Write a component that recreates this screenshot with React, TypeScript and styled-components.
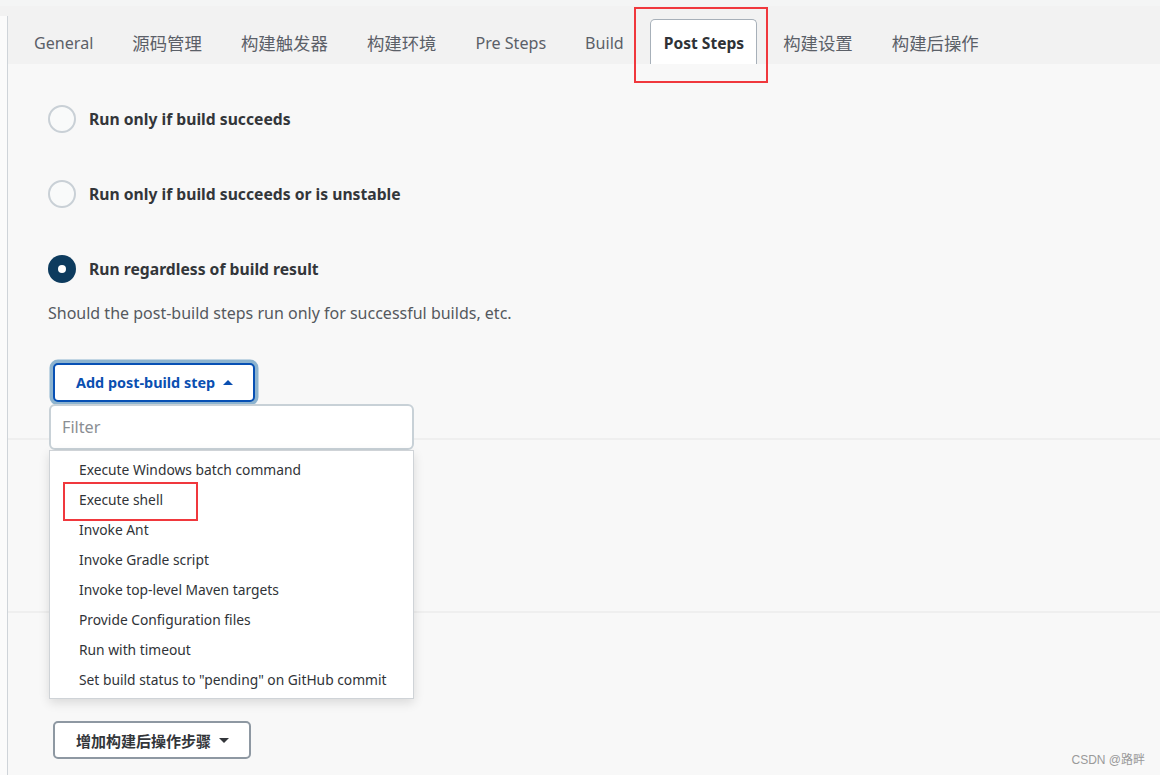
import React from 'react';
import styled, { createGlobalStyle } from 'styled-components';

// ______________________________________________________
//
// @ Data
const TABS = [
  { label: 'General' },
  { label: '源码管理', cjk: true },
  { label: '构建触发器', cjk: true },
  { label: '构建环境', cjk: true },
  { label: 'Pre Steps' },
  { label: 'Build' },
  { label: 'Post Steps', active: true },
  { label: '构建设置', cjk: true },
  { label: '构建后操作', cjk: true },
];

const OPTIONS = [
  { label: 'Run only if build succeeds', checked: false },
  { label: 'Run only if build succeeds or is unstable', checked: false },
  { label: 'Run regardless of build result', checked: true },
];

const STEPS = [
  'Execute Windows batch command',
  'Execute shell',
  'Invoke Ant',
  'Invoke Gradle script',
  'Invoke top-level Maven targets',
  'Provide Configuration files',
  'Run with timeout',
  'Set build status to "pending" on GitHub commit',
];

const FONT = `"Noto Sans", "Noto Sans CJK SC", sans-serif`;

// ______________________________________________________
//
// @ Global
const GlobalStyle = createGlobalStyle`
  html, body {
    margin: 0;
    padding: 0;
    background: #f8f8f8;
    font-family: ${FONT};
  }
  * { box-sizing: border-box; }
`;

// ______________________________________________________
//
// @ Layout
const Page = styled.div`
  width: 1160px;
  height: 775px;
  overflow: hidden;
  display: flex;
  flex-direction: column;
  background: #f8f8f8;
  position: relative;
`;

const TopStrip = styled.div`
  height: 16px;
  flex: none;
  background: linear-gradient(#f4f5f5 0, #f4f5f5 6px, #f2f2f2 6px);
`;

const Body = styled.div`
  flex: 1;
  display: flex;
`;

const Gutter = styled.div`
  width: 8px;
  flex: none;
  background: #fbfbfb;
  border-right: 1px solid #cfd4d9;
`;

const Main = styled.div`
  flex: 1;
  display: flex;
  flex-direction: column;
`;

// ______________________________________________________
//
// @ Tabs
const TabBar = styled.div`
  height: 48px;
  flex: none;
  display: flex;
  align-items: flex-end;
  padding-left: 6.5px;
  background: #f2f2f2;
`;

const Tab = styled.div<{ $active?: boolean; $cjk?: boolean }>`
  position: relative;
  height: ${p => (p.$active ? '45px' : '48px')};
  display: flex;
  align-items: center;
  padding: ${p => (p.$active ? '0 12px 0 13px' : '0 19.5px')};
  margin: ${p => (p.$active ? '0 6.5px' : '0')};
  font-size: ${p => (p.$cjk ? '17.4px' : p.$active ? '15.6px' : '16.1px')};
  font-weight: ${p => (p.$active ? 700 : 400)};
  color: ${p => (p.$active ? '#2f3236' : '#5b6068')};
  white-space: nowrap;
  background: ${p => (p.$active ? '#ffffff' : 'transparent')};
  border: ${p => (p.$active ? '1px solid #a7b0b9' : 'none')};
  border-bottom: none;
  border-radius: 5px 5px 0 0;
  padding-top: ${p => (p.$active ? '1px' : '5px')};
`;

const Mark = styled.div<{ $l: number; $t: number; $w: number; $h: number }>`
  position: absolute;
  left: ${p => p.$l}px;
  top: ${p => p.$t}px;
  width: ${p => p.$w}px;
  height: ${p => p.$h}px;
  border: 2px solid #f0383d;
  pointer-events: none;
  z-index: 5;
`;

// ______________________________________________________
//
// @ Content
const Content = styled.div`
  flex: 1;
  display: flex;
  flex-direction: column;
  padding: 41px 0 0 40px;
`;

const RadioList = styled.div`
  display: flex;
  flex-direction: column;
  gap: 47px;
`;

const RadioRow = styled.label`
  display: flex;
  align-items: center;
  gap: 13px;
  height: 28px;
  font-size: 15.7px;
  font-weight: 700;
  color: #33363a;
`;

const RadioCircle = styled.span<{ $checked?: boolean }>`
  width: 28px;
  height: 28px;
  flex: none;
  border-radius: 50%;
  display: flex;
  align-items: center;
  justify-content: center;
  background: ${p => (p.$checked ? '#0d3b5e' : '#f9fafa')};
  border: ${p => (p.$checked ? 'none' : '2.5px solid #c9d0d6')};

  &::after {
    content: '';
    display: ${p => (p.$checked ? 'block' : 'none')};
    width: 8px;
    height: 8px;
    border-radius: 50%;
    background: #ffffff;
  }
`;

const Help = styled.div`
  margin-top: 18px;
  height: 24px;
  line-height: 24px;
  font-size: 16px;
  color: #55595e;
`;

const ButtonWrap = styled.div`
  position: relative;
  margin-top: 38px;
  margin-left: 5px;
  align-self: flex-start;
`;

const StepButton = styled.button<{ $primary?: boolean }>`
  height: ${p => (p.$primary ? '39px' : '38px')};
  display: flex;
  align-items: center;
  gap: 8px;
  padding: 0 20px 0 21px;
  background: #ffffff;
  font-family: ${FONT};
  font-size: ${p => (p.$primary ? '14.4px' : '15px')};
  font-weight: 700;
  color: ${p => (p.$primary ? '#0a4fb1' : '#33363a')};
  border: 2px solid ${p => (p.$primary ? '#0750b4' : '#8e98a2')};
  border-radius: 5px;
  box-shadow: ${p => (p.$primary ? '0 0 0 3.5px #8cb3cf' : 'none')};
  cursor: pointer;
`;

const Caret = styled.span<{ $up?: boolean }>`
  width: 0;
  height: 0;
  border-left: 5px solid transparent;
  border-right: 5px solid transparent;
  border-${p => (p.$up ? 'bottom' : 'top')}: 5px solid currentColor;
`;

const Section = styled.div<{ $h: number }>`
  height: ${p => p.$h}px;
  border-top: 2px solid #efefef;
  margin-left: -40px;
  padding-left: 45px;
`;

const FirstSection = styled(Section)`
  margin-top: 36px;
`;

const BottomButtonWrap = styled.div`
  margin-top: 108px;
`;

// ______________________________________________________
//
// @ Dropdown
const Dropdown = styled.div`
  position: absolute;
  left: -4px;
  top: 41px;
  width: 365px;
  z-index: 4;
  display: flex;
  flex-direction: column;
`;

const Filter = styled.input`
  height: 46px;
  width: 100%;
  padding: 0 11px;
  font-family: ${FONT};
  font-size: 16.2px;
  color: #333;
  background: #ffffff;
  border: 2px solid #c8d1d7;
  border-radius: 6px;
  outline: none;

  &::placeholder {
    color: #8a8e93;
  }
`;

const Menu = styled.ul`
  position: relative;
  margin: 0;
  padding: 4px 0 3px;
  list-style: none;
  background: #ffffff;
  border: 1px solid #cfd3d7;
  box-shadow: 0 4px 10px rgba(0, 0, 0, 0.12);
`;

const MenuItem = styled.li`
  position: relative;
  height: 30px;
  line-height: 30px;
  padding-left: 29px;
  font-size: 13.8px;
  color: #303337;
  white-space: nowrap;
`;

const Watermark = styled.div`
  position: absolute;
  right: 15px;
  bottom: 8px;
  font-family: "Liberation Sans", "Noto Sans CJK SC", sans-serif;
  font-size: 12px;
  color: #9a9a9a;
`;

// ______________________________________________________
//
// @ App
const App: React.FC = () => (
  <>
    <GlobalStyle />
    <Page>
      <TopStrip />
      <Body>
        <Gutter />
        <Main>
          <TabBar>
            {TABS.map(t => (
              <Tab key={t.label} $active={t.active} $cjk={t.cjk}>
                {t.label}
                {t.active && <Mark $l={-17} $t={-13} $w={134} $h={76} />}
              </Tab>
            ))}
          </TabBar>
          <Content>
            <RadioList>
              {OPTIONS.map(o => (
                <RadioRow key={o.label}>
                  <RadioCircle $checked={o.checked} />
                  {o.label}
                </RadioRow>
              ))}
            </RadioList>
            <Help>Should the post-build steps run only for successful builds, etc.</Help>
            <ButtonWrap>
              <StepButton $primary>
                Add post-build step
                <Caret $up />
              </StepButton>
              <Dropdown>
                <Filter placeholder="Filter" />
                <Menu>
                  {STEPS.map(s => (
                    <MenuItem key={s}>
                      {s}
                      {s === 'Execute shell' && <Mark $l={13} $t={-3} $w={135} $h={39} />}
                    </MenuItem>
                  ))}
                </Menu>
              </Dropdown>
            </ButtonWrap>
            <FirstSection $h={173} />
            <Section $h={170}>
              <BottomButtonWrap>
                <StepButton>
                  增加构建后操作步骤
                  <Caret />
                </StepButton>
              </BottomButtonWrap>
            </Section>
          </Content>
        </Main>
      </Body>
      <Watermark>CSDN @路畔</Watermark>
    </Page>
  </>
);

export default App;
